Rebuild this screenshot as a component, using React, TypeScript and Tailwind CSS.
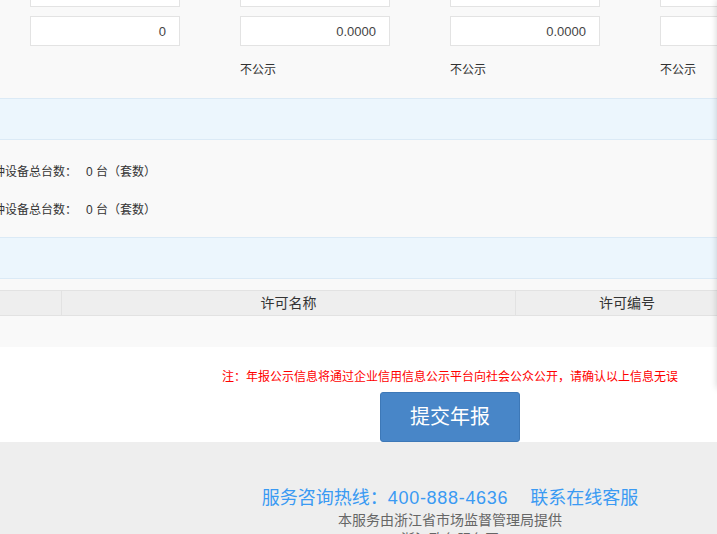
import React from 'react';

const font = { fontFamily: '"Liberation Sans", "Noto Sans CJK SC", sans-serif' };

function Field({ value }: { value?: string }) {
  return (
    <div className="w-[150px] h-[30px] shrink-0 border border-[#e3e3e3] bg-white flex items-center justify-end pr-[13px] pt-[1px] text-[13px] text-[#444]">
      {value}
    </div>
  );
}

function Band() {
  return <div className="h-[42px] border-y border-[#dbeaf6] bg-[#ecf6fd]" />;
}

function CountRow({ label }: { label: string }) {
  return (
    <div className="h-[38px] flex items-center text-[12px] text-[#333]">
      <div className="w-[77px] shrink-0 flex justify-end">
        <span className="shrink-0 whitespace-nowrap">{label}</span>
      </div>
      <span className="ml-[9px] whitespace-nowrap">0 台（套数）</span>
    </div>
  );
}

export default function App() {
  return (
    <div className="relative w-[717px] h-[534px] overflow-hidden bg-white" style={font}>
      <div className="w-[900px] -mt-[23px]">
        {/* amounts */}
        <div className="bg-[#f9f9f9] pb-[18px]">
          <div className="flex gap-[60px] pl-[30px]">
            <Field />
            <Field />
            <Field />
            <Field />
          </div>
          <div className="flex gap-[60px] pl-[30px] mt-[9px]">
            <Field value="0" />
            <Field value="0.0000" />
            <Field value="0.0000" />
            <Field value="0.0000" />
          </div>
          <div className="flex gap-[60px] pl-[30px] mt-[14px] text-[12px] leading-[20px] text-[#333]">
            <div className="w-[150px]" />
            <div className="w-[150px]">不公示</div>
            <div className="w-[150px]">不公示</div>
            <div className="w-[150px]">不公示</div>
          </div>
        </div>

        <Band />

        {/* equipment */}
        <div className="bg-[#f9f9f9] pt-[13px] pb-[8px]">
          <CountRow label="其中特种设备总台数：" />
          <CountRow label="其中特种设备总台数：" />
        </div>

        <Band />

        {/* licences */}
        <div className="bg-[#f9f9f9] pt-[11px]">
          <div className="flex h-[26px] border-y border-[#e2e2e2] bg-[#eeeeee] text-[14px] text-[#333]">
            <div className="w-[62px] shrink-0 border-r border-[#e2e2e2]" />
            <div className="w-[454px] shrink-0 border-r border-[#e2e2e2] flex items-center justify-center">许可名称</div>
            <div className="w-[222px] shrink-0 flex items-center justify-center">许可编号</div>
          </div>
          <div className="h-[31px]" />
        </div>

        {/* submit */}
        <div className="bg-white pt-[21px] flex flex-col items-center">
          <p className="text-[12px] leading-[18px] text-[#ff0000]">
            注：年报公示信息将通过企业信用信息公示平台向社会公众公开，请确认以上信息无误
          </p>
          <button className="mt-[6px] w-[140px] h-[50px] rounded-[3px] border border-[#3d78b7] bg-[#4886c8] text-white text-[20px]">
            提交年报
          </button>
        </div>

        {/* footer */}
        <div className="bg-[#eeeeee] pt-[44px] pb-[20px] flex flex-col items-center">
          <div className="text-[18px] leading-[24px] text-[#3a9af3] whitespace-nowrap">
            <span>服务咨询热线：</span>
            <span className="tracking-[0.7px]">400-888-4636</span>
            <span className="ml-[22px]">联系在线客服</span>
          </div>
          <div className="text-[14px] leading-[21px] text-[#666]">本服务由浙江省市场监督管理局提供</div>
          <div className="text-[14px] leading-[16px] text-[#666]">浙江政务服务网</div>
        </div>
      </div>

      {/* shadow of the floating side panel */}
      <div className="absolute top-0 right-[-20px] w-[20px] h-[388px] bg-white shadow-[0_0_7px_rgba(0,0,0,0.18)]" />
    </div>
  );
}
